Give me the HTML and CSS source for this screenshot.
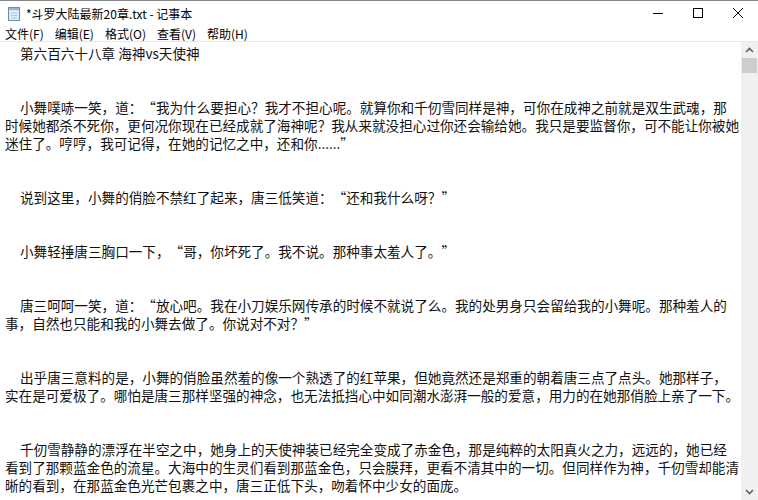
FILE: index.html
```html
<!DOCTYPE html>
<html lang="zh-CN">

<head>
    <meta charset="utf-8" />
    <title>记事本</title>
    <link rel="stylesheet" href="styles.css">
</head>

<body>
    <div class="window">
        <div class="titlebar">
            <svg class="app-icon" width="14" height="16" viewBox="0 0 14 16">
                <rect x="1.5" y="1.5" width="11" height="13" fill="#d9ecf7" stroke="#6a8fa8" />
                <rect x="2" y="2" width="10" height="2" fill="#8fb7d1" />
                <line x1="4" y1="7" x2="10" y2="7" stroke="#b0c8d8" />
                <line x1="4" y1="9.5" x2="10" y2="9.5" stroke="#b0c8d8" />
                <line x1="4" y1="12" x2="10" y2="12" stroke="#b0c8d8" />
            </svg>
            <span class="title">*斗罗大陆最新20章.txt - 记事本</span>
            <div class="controls">
                <span class="ctl">
                    <svg width="10" height="10" viewBox="0 0 10 10"><line x1="0" y1="5.5" x2="10" y2="5.5" stroke="#000" /></svg>
                </span>
                <span class="ctl">
                    <svg width="10" height="10" viewBox="0 0 10 10"><rect x="0.5" y="0.5" width="9" height="9" fill="none" stroke="#000" /></svg>
                </span>
                <span class="ctl">
                    <svg width="10" height="10" viewBox="0 0 10 10"><path d="M0 0 L10 10 M10 0 L0 10" stroke="#000" /></svg>
                </span>
            </div>
        </div>
        <div class="menubar">
            <span>文件(F)</span>
            <span>编辑(E)</span>
            <span>格式(O)</span>
            <span>查看(V)</span>
            <span>帮助(H)</span>
        </div>
        <div class="editor">
            <div class="text">
                <p class="para">第六百六十八章 海神vs天使神</p>
                <p class="gap"></p>
                <p class="para">小舞噗哧一笑，道：<span class="q open">“</span>我为什么要担心？我才不担心呢。就算你和千仞雪同样是神，可你在成神之前就是双生武魂，那时候她都杀不死你，更何况你现在已经成就了海神呢？我从来就没担心过你还会输给她。我只是要监督你，可不能让你被她迷住了。哼哼，我可记得，在她的记忆之中，还和你......<span class="q close">”</span></p>
                <p class="gap"></p>
                <p class="para">说到这里，小舞的俏脸不禁红了起来，唐三低笑道：<span class="q open">“</span>还和我什么呀？<span class="q close">”</span></p>
                <p class="gap"></p>
                <p class="para">小舞轻捶唐三胸口一下，<span class="q open">“</span>哥，你坏死了。我不说。那种事太羞人了。<span class="q close">”</span></p>
                <p class="gap"></p>
                <p class="para">唐三呵呵一笑，道：<span class="q open">“</span>放心吧。我在小刀娱乐网传承的时候不就说了么。我的处男身只会留给我的小舞呢。那种羞人的事，自然也只能和我的小舞去做了。你说对不对？<span class="q close">”</span></p>
                <p class="gap"></p>
                <p class="para">出乎唐三意料的是，小舞的俏脸虽然羞的像一个熟透了的红苹果，但她竟然还是郑重的朝着唐三点了点头。她那样子，实在是可爱极了。哪怕是唐三那样坚强的神念，也无法抵挡心中如同潮水澎湃一般的爱意，用力的在她那俏脸上亲了一下。</p>
                <p class="gap"></p>
                <p class="para">千仞雪静静的漂浮在半空之中，她身上的天使神装已经完全变成了赤金色，那是纯粹的太阳真火之力，远远的，她已经看到了那颗蓝金色的流星。大海中的生灵们看到那蓝金色，只会膜拜，更看不清其中的一切。但同样作为神，千仞雪却能清晰的看到，在那蓝金色光芒包裹之中，唐三正低下头，吻着怀中少女的面庞。</p>
            </div>
            <div class="scrollbar">
                <div class="arrow">
                    <svg width="9" height="6" viewBox="0 0 9 6"><path d="M1 5 L4.5 1.5 L8 5" fill="none" stroke="#606060" stroke-width="1.6" /></svg>
                </div>
                <div class="thumb"></div>
                <div class="track"></div>
                <div class="arrow">
                    <svg width="9" height="6" viewBox="0 0 9 6"><path d="M1 1 L4.5 4.5 L8 1" fill="none" stroke="#606060" stroke-width="1.6" /></svg>
                </div>
            </div>
        </div>
    </div>
</body>

</html>
```
FILE: styles.css
```css
body {
    margin: 0;
    background: #fff;
}

.window {
    width: 758px;
    height: 500px;
    display: flex;
    flex-direction: column;
    border-top: 1px solid #8a8a8a;
    box-sizing: border-box;
    font-family: "Noto Sans CJK SC", "Noto Sans", sans-serif;
    color: #000;
    overflow: hidden;
}

.titlebar {
    height: 25px;
    display: flex;
    align-items: center;
    padding-left: 7px;
}

.app-icon {
    margin-right: 5px;
}

.title {
    font-size: 12px;
    flex: 1;
}

.controls {
    display: flex;
    height: 100%;
}

.ctl {
    width: 40px;
    display: flex;
    align-items: center;
    justify-content: center;
    padding-bottom: 1px;
}

.menubar {
    height: 16px;
    display: flex;
    align-items: center;
    font-size: 12px;
    border-bottom: 1px solid #e8e8e8;
    padding-top: 1px;
    padding-bottom: 1px;
    box-sizing: border-box;
}

.menubar span {
    padding: 0 6px 0 5px;
}

.editor {
    flex: 1;
    display: flex;
    min-height: 0;
}

.text {
    flex: 1;
    /* largeur utile 735px, comme le retour à la ligne du Bloc-notes */
    padding: 2px 1px 0 5px;
    font-size: 13.6px;
    line-height: 18px;
    color: #111;
}

.para {
    margin: 0;
    text-indent: 15px;
}

/* guillemets pleine chasse */
.q {
    display: inline-block;
    width: 1em;
    text-indent: 0;
}

.open {
    text-align: right;
}

.close {
    text-align: left;
}

/* deux lignes vides entre les paragraphes */
.gap {
    margin: 0;
    height: 36px;
}

.scrollbar {
    width: 17px;
    background: #f0f0f0;
    display: flex;
    flex-direction: column;
}

.arrow {
    height: 16px;
    display: flex;
    align-items: center;
    justify-content: center;
}

.thumb {
    height: 15px;
    margin: 0 1px;
    background: #cdcdcd;
}

.track {
    flex: 1;
}
```
